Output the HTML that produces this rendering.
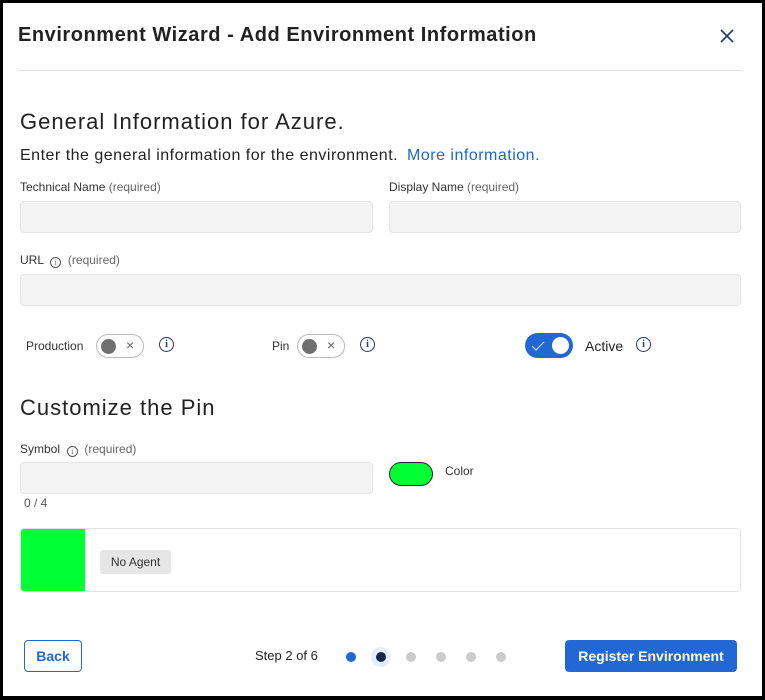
<!DOCTYPE html>
<html><head><style>
*{box-sizing:border-box;margin:0;padding:0}
body{width:765px;height:700px;background:#000;font-family:"Liberation Sans",sans-serif;color:#222;position:relative;overflow:hidden}
.dlg{position:absolute;left:3px;top:3px;width:759px;height:693px;background:#fff}
.a{position:absolute}
.in{position:absolute;background:#f4f4f4;border:1px solid #e4e4e4;border-radius:4px}
.lbl{font-size:12px;color:#333}
.lbl span{color:#666}
.info{display:inline-block;width:11px;height:11px;border:1px solid #555;border-radius:50%;font-size:8px;text-align:center;line-height:10px;color:#555;vertical-align:-1px;font-family:"Liberation Serif",serif}
.infob{position:absolute;width:15px;height:15px;border:1.3px solid #1e3a6e;border-radius:50%;font-size:10px;text-align:center;line-height:13px;color:#1e3a6e;font-family:"Liberation Serif",serif;font-weight:bold}
.tog{position:absolute;width:48px;height:24px;border:1px solid #bbb;border-radius:12px;background:#fff}
.tog i{position:absolute;left:4px;top:4px;width:15px;height:15px;border-radius:50%;background:#6f6f6f}
.tog b{position:absolute;left:29px;top:2px;font-weight:normal;font-size:14px;color:#666}
.dot{position:absolute;width:10px;height:10px;border-radius:50%;background:#ccc;top:652px}
</style></head><body>
<div class="dlg"></div>
<div class="a" style="left:18px;top:24px;font-size:20px;font-weight:bold;color:#222;letter-spacing:0.55px">Environment Wizard - Add Environment Information</div>
<svg class="a" style="left:719px;top:28px" width="16" height="16"><path d="M2 2L14 14M14 2L2 14" stroke="#1e3a6e" stroke-width="1.6"/></svg>
<div class="a" style="left:18px;top:70px;width:725px;height:1px;background:#e2e2e2"></div>
<div class="a" style="left:20px;top:109px;font-size:22px;color:#222;letter-spacing:1px">General Information for Azure.</div>
<div class="a" style="left:20px;top:147px;font-size:16px;color:#222;letter-spacing:0.5px">Enter the general information for the environment. <span style="color:#1a66d6;margin-left:4px">More information.</span></div>
<div class="a lbl" style="left:20px;top:180px">Technical Name <span>(required)</span></div>
<div class="a lbl" style="left:389px;top:180px">Display Name <span>(required)</span></div>
<div class="in" style="left:20px;top:201px;width:353px;height:32px"></div>
<div class="in" style="left:389px;top:201px;width:352px;height:32px"></div>
<div class="a lbl" style="left:20px;top:253px">URL &nbsp;<span class="info">i</span> &nbsp;<span>(required)</span></div>
<div class="in" style="left:20px;top:274px;width:721px;height:32px"></div>
<div class="a lbl" style="left:26px;top:339px">Production</div>
<div class="tog" style="left:96px;top:334px"><i></i><b>×</b></div>
<div class="infob" style="left:159px;top:337px">i</div>
<div class="a lbl" style="left:272px;top:339px">Pin</div>
<div class="tog" style="left:297px;top:334px"><i></i><b>×</b></div>
<div class="infob" style="left:360px;top:337px">i</div>
<div class="a" style="left:525px;top:333px;width:48px;height:25px;border-radius:13px;background:#2268d4"></div>
<div class="a" style="left:552px;top:337px;width:17px;height:17px;border-radius:50%;background:#fff"></div>
<svg class="a" style="left:531px;top:340px" width="14" height="12"><path d="M1 6L5 10L13 2" stroke="#cfe0fa" stroke-width="1.2" fill="none"/></svg>
<div class="a" style="left:585px;top:338px;font-size:14px;color:#222">Active</div>
<div class="infob" style="left:636px;top:337px">i</div>
<div class="a" style="left:20px;top:395px;font-size:22px;color:#222;letter-spacing:1px">Customize the Pin</div>
<div class="a lbl" style="left:20px;top:442px">Symbol &nbsp;<span class="info">i</span> &nbsp;<span>(required)</span></div>
<div class="in" style="left:20px;top:462px;width:353px;height:32px"></div>
<div class="a" style="left:24px;top:496px;font-size:12px;color:#555">0 / 4</div>
<div class="a" style="left:389px;top:462px;width:44px;height:24px;border-radius:12px;background:#00ff33;border:1px solid #222"></div>
<div class="a" style="left:445px;top:464px;font-size:12px;color:#333">Color</div>
<div class="a" style="left:20px;top:528px;width:721px;height:64px;border:1px solid #e2e2e2;border-radius:4px;overflow:hidden"><div style="width:64px;height:64px;background:#00ff33"></div></div>
<div class="a" style="left:100px;top:550px;width:71px;height:24px;background:#e6e6e6;border-radius:3px;font-size:12px;color:#333;text-align:center;line-height:24px">No Agent</div>
<div class="a" style="left:24px;top:640px;width:58px;height:32px;border:1px solid #2268d4;border-radius:4px;color:#2268d4;font-weight:bold;font-size:14px;text-align:center;line-height:30px">Back</div>
<div class="a" style="left:255px;top:648px;font-size:13px;color:#222">Step 2 of 6</div>
<div class="dot" style="left:346px;background:#2268d4"></div>
<div class="a" style="left:371px;top:647px;width:20px;height:20px;border-radius:50%;background:#e6eef9"></div>
<div class="dot" style="left:376px;background:#14284f"></div>
<div class="dot" style="left:406px"></div>
<div class="dot" style="left:436px"></div>
<div class="dot" style="left:466px"></div>
<div class="dot" style="left:496px"></div>
<div class="a" style="left:565px;top:640px;width:172px;height:32px;background:#2268d4;border-radius:4px;color:#fff;font-weight:bold;font-size:14px;text-align:center;line-height:32px">Register Environment</div>
</body></html>
